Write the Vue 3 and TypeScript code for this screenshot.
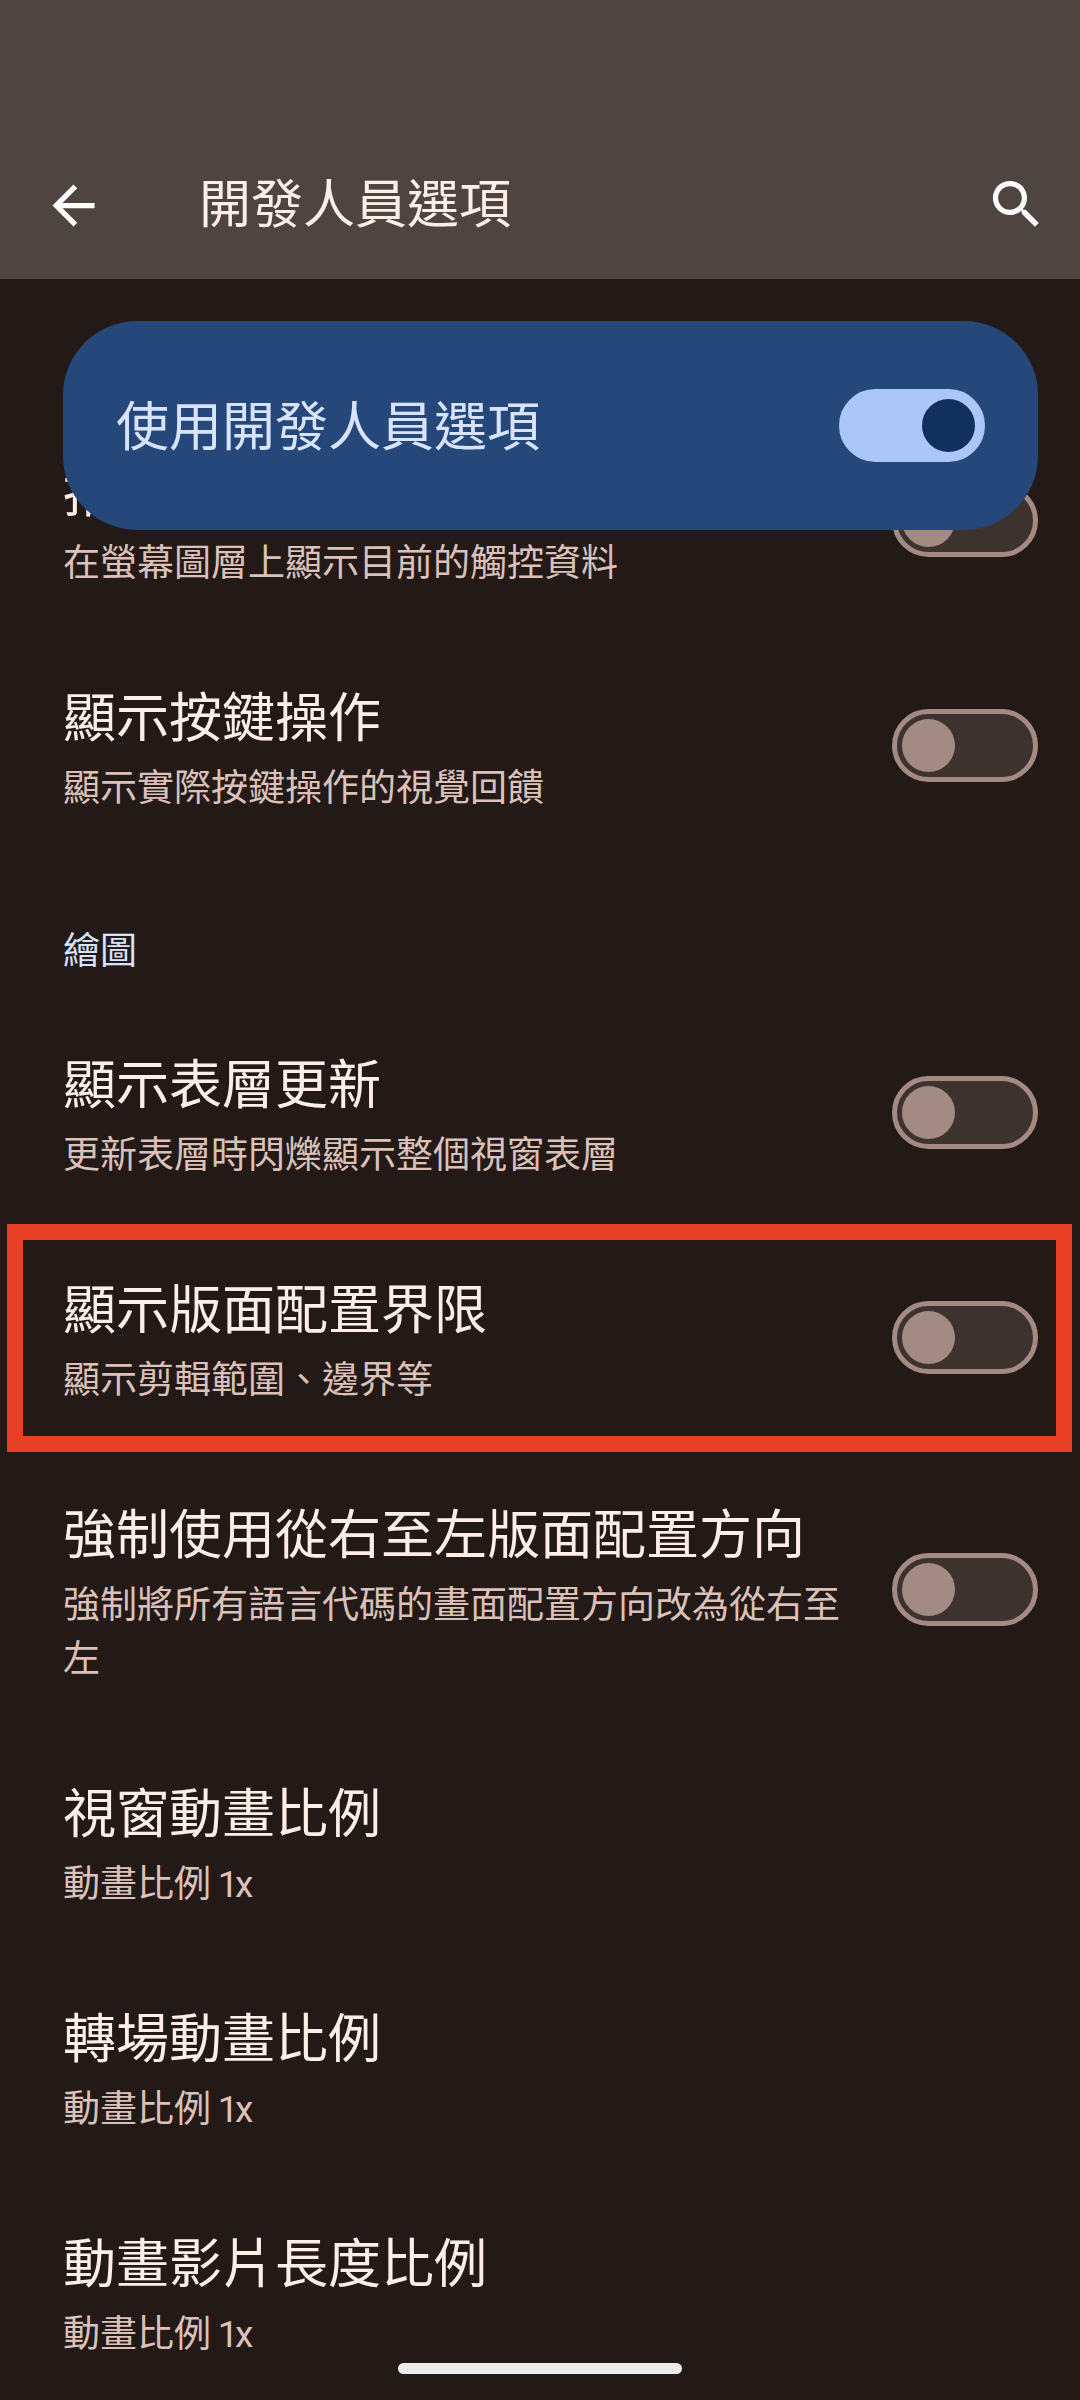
<script setup lang="ts">
interface Preference {
  title: string
  summary: string
  value?: string
  toggle: boolean
  highlighted?: boolean
}

const inputRows: Preference[] = [
  { title: '指標位置', summary: '在螢幕圖層上顯示目前的觸控資料', toggle: true },
  { title: '顯示按鍵操作', summary: '顯示實際按鍵操作的視覺回饋', toggle: true },
]

const drawingRows: Preference[] = [
  { title: '顯示表層更新', summary: '更新表層時閃爍顯示整個視窗表層', toggle: true },
  { title: '顯示版面配置界限', summary: '顯示剪輯範圍、邊界等', toggle: true, highlighted: true },
  { title: '強制使用從右至左版面配置方向', summary: '強制將所有語言代碼的畫面配置方向改為從右至左', toggle: true },
  { title: '視窗動畫比例', summary: '動畫比例', value: '1x', toggle: false },
  { title: '轉場動畫比例', summary: '動畫比例', value: '1x', toggle: false },
  { title: '動畫影片長度比例', summary: '動畫比例', value: '1x', toggle: false },
]

const sections = [
  { label: '', rows: inputRows },
  { label: '繪圖', rows: drawingRows },
]
</script>

<template>
  <div class="screen">
    <header class="app-bar">
      <svg class="icon back" viewBox="0 0 24 24"><path d="M20 11H7.83l5.59-5.59L12 4l-8 8 8 8 1.41-1.41L7.83 13H20v-2z" /></svg>
      <h1>開發人員選項</h1>
      <svg class="icon search" viewBox="0 0 24 24"><path d="M15.5 14h-.79l-.28-.27A6.47 6.47 0 0 0 16 9.5 6.5 6.5 0 1 0 9.5 16c1.61 0 3.09-.59 4.23-1.57l.27.28v.79l5 4.99L20.49 19l-4.99-5zm-6 0C7.01 14 5 11.99 5 9.5S7.01 5 9.5 5 14 7.01 14 9.5 11.99 14 9.5 14z" /></svg>
    </header>

    <div class="main-switch">
      <span>使用開發人員選項</span>
      <i class="switch on"></i>
    </div>

    <main class="list">
      <section v-for="section in sections" :key="section.label">
        <h2 v-if="section.label">{{ section.label }}</h2>
        <div v-for="row in section.rows" :key="row.title" class="row" :class="{ highlighted: row.highlighted }">
          <div class="text">
            <div class="title">{{ row.title }}</div>
            <div class="summary">{{ row.summary }}<span v-if="row.value" class="value">&nbsp;{{ row.value }}</span></div>
          </div>
          <i v-if="row.toggle" class="switch"></i>
        </div>
      </section>
    </main>

    <div class="nav-handle"></div>
  </div>
</template>

<style>
body {
  background: #231a17;
}
</style>

<style scoped>
.screen {
  position: relative;
  width: 1080px;
  height: 2400px;
  overflow: hidden;
  background: #231a17;
  color: #ffede8;
  font-family: "Noto Sans CJK TC", sans-serif;
}
.app-bar {
  display: flex;
  align-items: center;
  box-sizing: border-box;
  height: 279px;
  padding: 131px 32px 0 42px;
  background: #4f4540;
}
.icon {
  width: 63px;
  height: 63px;
  flex: none;
  fill: #fff;
}
.search {
  margin-bottom: 1px;
}
h1 {
  flex: 1;
  margin: 0 0 8px 94px;
  font-size: 52px;
  font-weight: 400;
  line-height: 76px;
}
.main-switch {
  position: relative;
  z-index: 1;
  display: flex;
  align-items: center;
  justify-content: space-between;
  box-sizing: border-box;
  height: 209px;
  margin: 42px 42px 0 63px;
  padding: 0 53px;
  border-radius: 74px;
  background: #25477a;
  color: #d7e3ff;
  font-size: 53px;
}
.main-switch span {
  margin-bottom: 5px;
}
.list {
  margin-top: -122px;
}
h2 {
  box-sizing: border-box;
  height: 142px;
  margin: 0;
  padding: 63px 63px 0;
  color: #d7e3ff;
  font-size: 37px;
  font-weight: 400;
  line-height: 54px;
}
.row {
  position: relative;
  display: flex;
  align-items: center;
  justify-content: space-between;
  box-sizing: border-box;
  min-height: 225px;
  padding: 42px 42px 46px 63px;
}
.row .switch {
  margin-top: 4px;
}
.text {
  width: 787px;
}
.title {
  margin-bottom: 5px;
  font-size: 53px;
  line-height: 78px;
}
.summary {
  color: #dbc1b9;
  font-size: 37px;
  line-height: 54px;
}
.value {
  margin-left: 1px;
  font-family: Roboto, sans-serif;
  letter-spacing: -3.5px;
  line-height: 0;
}
.highlighted::after {
  content: "";
  position: absolute;
  inset: -1px 8px -2px 7px;
  border: 16px solid #e94025;
}
.switch {
  flex: none;
  box-sizing: border-box;
  width: 146px;
  height: 73px;
  padding: 5px;
  border: 5px solid #a38b84;
  border-radius: 37px;
  background: #3e322e;
}
.switch::before {
  content: "";
  display: block;
  width: 53px;
  height: 53px;
  border-radius: 50%;
  background: #a38b84;
}
.switch.on {
  border-color: #abc7fa;
  background: #abc7fa;
}
.switch.on::before {
  margin-left: auto;
  background: #11305c;
}
.nav-handle {
  position: absolute;
  left: 398px;
  top: 2363px;
  width: 284px;
  height: 11px;
  border-radius: 6px;
  background: #ececec;
}
</style>
